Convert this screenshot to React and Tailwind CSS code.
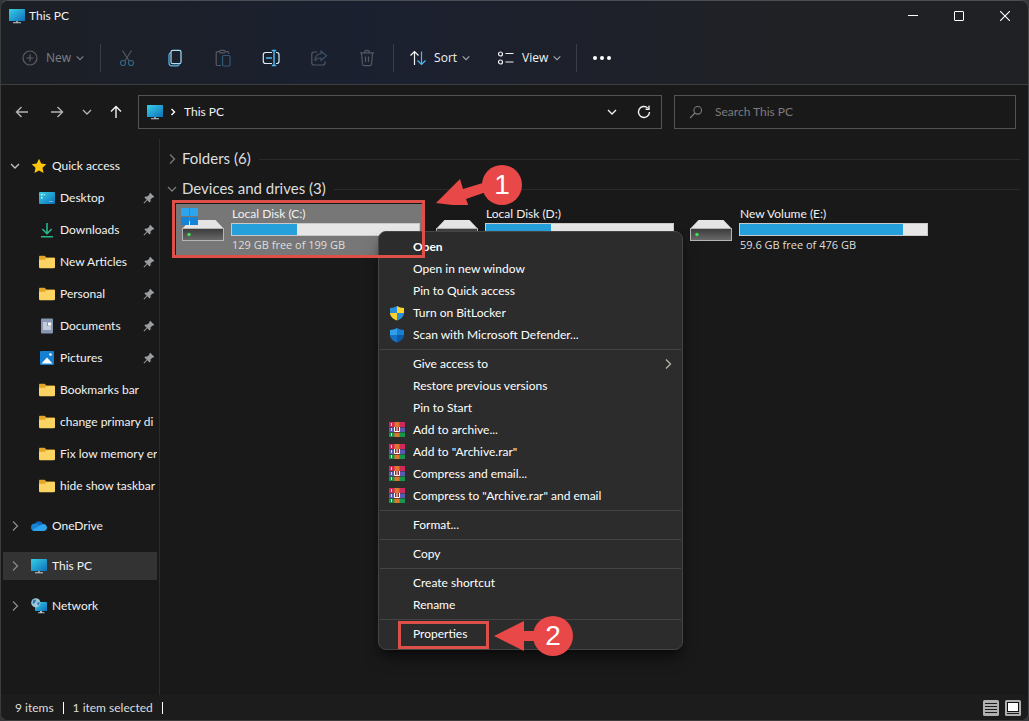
import React from 'react';

const PcIcon = ({ className = 'size-4' }) => (
    <svg viewBox="0 0 16 16" className={className} aria-hidden="true">
        <defs>
            <linearGradient id="pc" x1="0" y1="0" x2="1" y2="1">
                <stop offset="0" stopColor="#35d1e6" />
                <stop offset="1" stopColor="#0f6fbb" />
            </linearGradient>
        </defs>
        <rect x="0" y="1" width="16" height="12" rx="0.6" fill="url(#pc)" />
        <path d="M7 13h2v1.5H7z" fill="#8d9aa5" />
        <path d="M4 14.3h8v1H4z" fill="#c7d0d6" />
    </svg>
);

const FolderIcon = () => (
    <svg viewBox="0 0 16 16" className="size-4" aria-hidden="true">
        <path d="M0 3c0-.8.5-1.300 1.200-1.300h4.300L7.500 3.600H15c.6 0 1 .4 1 1V6H0z" fill="#e3a52a" />
        <path d="M0 5.800h6L7.800 4H15c.6 0 1 .5 1 1v8c0 .7-.4 1.200-1.100 1.200H1.100C.4 14.200 0 13.700 0 13z" fill="#fcd462" />
    </svg>
);

const StarIcon = () => (
    <svg viewBox="0 0 16 16" className="size-4" aria-hidden="true">
        <path d="M8 .8l2.200 4.800 5.100.6-3.800 3.500 1 5.300L8 12.400 3.500 15l1-5.300L.7 6.200l5.100-.6z" fill="#fcc60e" />
    </svg>
);

const DesktopIcon = () => (
    <svg viewBox="0 0 16 16" className="size-4" aria-hidden="true">
        <rect y="2" width="16" height="12" rx="1" fill="url(#pc)" />
        <path d="M2 4h1.500v1.500H2zM2 7h1.500v1.500H2zM4.800 4h1v1.200h-1z" fill="#e8fbff" />
        <path d="M10.500 11h1v1h-1zM12.500 11h1v1h-1z" fill="#cde9fb" />
    </svg>
);

const DownloadsIcon = () => (
    <svg viewBox="0 0 16 16" className="size-4" fill="none" stroke="#29b58c" strokeWidth="1.6" aria-hidden="true">
        <path d="M8 1v10.500M3.300 7L8 11.700 12.700 7M2 14.800h12" />
    </svg>
);

const DocumentsIcon = () => (
    <svg viewBox="0 0 16 16" className="size-4" aria-hidden="true">
        <rect x="2" y="0.5" width="12" height="15" rx="1" fill="#8797b3" />
        <path d="M4 4.500h4v1H4zM4 6.500h4v1H4zM9 4.500h3.200v3H9zM4 8.500h8.200v1H4zM4 10.500h8.200v1H4z" fill="#fff" />
    </svg>
);

const PicturesIcon = () => (
    <svg viewBox="0 0 16 16" className="size-4" aria-hidden="true">
        <rect x="1" y="1" width="14" height="14" rx="1" fill="#1580d2" />
        <path d="M2.500 13.500L8 7.500l5.500 6z" fill="#fff" />
        <circle cx="11.500" cy="4.500" r="1.300" fill="#fff" />
    </svg>
);

const CloudIcon = () => (
    <svg viewBox="0 0 16 16" className="size-4" aria-hidden="true">
        <path d="M4.200 5.500A4.300 4.300 0 0 1 12 6l-7 5z" fill="#0f66b8" />
        <path d="M3.800 5.400a4 4 0 0 1 3 .7l7.600 5.900a2.200 2.200 0 0 1-1.200 1H3.800a3.800 3.800 0 0 1 0-7.600z" fill="#1683d4" />
        <path d="M11.500 6.200a3.500 3.500 0 0 1 2.700 6.400c-.3.300-.8.400-1.200.4H3.500a3 3 0 0 1-2.300-1.100l8-4.700c.7-.6 1.500-1 2.300-1z" fill="#2ba4ec" />
    </svg>
);

const NetworkIcon = () => (
    <svg viewBox="0 0 16 16" className="size-4" aria-hidden="true">
        <rect x="4" y="4" width="12" height="9" rx="0.6" fill="url(#pc)" />
        <path d="M9 13h2v1.500H9zM7 14.300h6.500v1H7z" fill="#b6c3cc" />
        <circle cx="4.800" cy="4.800" r="4.600" fill="#9dc9de" />
        <path d="M2 2.200c1.500-1.200 3-.8 3.300.2.300.9-1.400 1-1.200 2.200.2 1.100-1.800 1.400-2.600.6zM6 4.800l2.500-.8c.5 1.600-.4 3.200-1.500 3.700z" fill="#3979a5" />
    </svg>
);

const PinIcon = () => (
    <svg viewBox="0 0 12 12" className="size-3 shrink-0 text-[#9b9ea1]" fill="currentColor" aria-hidden="true">
        <path d="M7.200.8l4 4-1 .9-.7-.1-2 2 .1 2-1 1L4.300 8.300 1.200 11.500l-.7-.7 3.200-3.100L1.400 5.400l1-1 2 .1 2-2-.1-.8z" />
    </svg>
);

const Chevron = ({ dir = 'down', className = 'size-3' }) => (
    <svg viewBox="0 0 12 12" className={className} fill="none" stroke="currentColor" strokeWidth="1.3" aria-hidden="true">
        {dir === 'down' ? <path d="M2 4l4 4 4-4" /> : <path d="M4 1.500L8.500 6 4 10.500" />}
    </svg>
);

const DriveIcon = ({ system }) => (
    <svg viewBox="0 0 44 36" className="h-9 w-11 shrink-0" aria-hidden="true">
        <defs>
            <linearGradient id="drive" x1="0" y1="0" x2="0" y2="1">
                <stop offset="0" stopColor="#3a3a3a" />
                <stop offset="1" stopColor="#6a6a6a" />
            </linearGradient>
        </defs>
        <path d="M9.500 12h25L43 21H1z" fill="#e4e4e4" />
        <rect x="1.500" y="20.500" width="41" height="12" fill="url(#drive)" stroke="#b5b5b5" />
        <circle cx="8" cy="26.500" r="1.700" fill="#3fe04a" />
        {system && (
            <>
                <path d="M0 0h8v8H0zM9 0h8v8H9z" fill="#2ba5ee" />
                <path d="M0 9h8v8H0zM9 9h8v8H9z" fill="#1583d8" />
            </>
        )}
    </svg>
);

const ShieldIcon = ({ colors }) => (
    <svg viewBox="0 0 16 16" className="size-4" aria-hidden="true">
        <path d="M8 1C6 2.300 3.600 3 1 3v5h7z" fill={colors[0]} />
        <path d="M8 1c2 1.300 4.400 2 7 2v5H8z" fill={colors[1]} />
        <path d="M1 8c.2 3.500 3 6 7 7.500V8z" fill={colors[2]} />
        <path d="M15 8c-.2 3.500-3 6-7 7.500V8z" fill={colors[3]} />
    </svg>
);

const RarIcon = () => (
    <svg viewBox="0 0 16 16" className="size-4" aria-hidden="true">
        <path d="M0 0h16v5H0z" fill="#d0285a" />
        <path d="M0 5.500h16v4.500H0z" fill="#5c5ab0" />
        <path d="M0 10.500h16V15H0z" fill="#16964a" />
        <path d="M2 1h1v3H2zM2 6h1v3H2zM2 11h1v3H2z" fill="#f3dc6b" />
        <path d="M5.500 0h5v15h-5z" fill="#e0762b" />
        <path d="M5 5h6v6H5z" fill="#8a2d2d" />
        <path d="M5.500 5v4.500h5V5M8 5v4" fill="none" stroke="#fff" />
    </svg>
);

const icon = {
    viewBox: '0 0 20 20',
    className: 'size-5',
    fill: 'none',
    stroke: 'currentColor',
    strokeWidth: '1.2',
    'aria-hidden': true,
};

const tools = [
    {
        name: 'Cut',
        disabled: true,
        svg: (
            <svg {...icon}>
                <path d="M5.500 2.500l6.700 10.500M14.500 2.500L7.800 13" />
                <g stroke="#2f6483">
                    <circle cx="6" cy="15" r="2.500" />
                    <circle cx="14" cy="15" r="2.500" />
                </g>
            </svg>
        ),
    },
    {
        name: 'Copy',
        svg: (
            <svg {...icon}>
                <path d="M6 4.500c-1.300.3-2 1-2 2.300V15c0 1.800 1 2.800 2.800 2.800h5.400c1 0 1.800-.5 2.200-1.300" stroke="#58b7ea" />
                <rect x="6" y="2.300" width="10" height="13.400" rx="1.800" stroke="#a9ddf8" />
            </svg>
        ),
    },
    {
        name: 'Paste',
        disabled: true,
        svg: (
            <svg {...icon}>
                <path d="M8 17.500H4.500c-.8 0-1.300-.5-1.300-1.300V5c0-.8.5-1.400 1.300-1.400h2M12.500 3.600h1.800c.8 0 1.400.5 1.400 1.400v1" />
                <rect x="6.700" y="2.300" width="5.600" height="2.600" rx="1.200" />
                <rect x="9.500" y="7.500" width="7.500" height="10.500" rx="1.200" stroke="#2f5a78" />
            </svg>
        ),
    },
    {
        name: 'Rename',
        svg: (
            <svg {...icon}>
                <path d="M11 4.500H4.500c-1.300 0-2.200.9-2.200 2.200v6.600c0 1.300.9 2.200 2.200 2.200H11M15 4.500h.8c1.300 0 2.200.9 2.200 2.200v6.600c0 1.300-.9 2.200-2.200 2.200H15" stroke="#d8ecf7" />
                <path d="M5 10h6M10.800 2.500h4.400M13 2.500v15M10.800 17.500h4.400" stroke="#4db8f0" strokeWidth="1.5" />
            </svg>
        ),
    },
    {
        name: 'Share',
        disabled: true,
        svg: (
            <svg {...icon}>
                <path d="M8 4H5C3.700 4 2.800 4.900 2.800 6.200v8.600C2.800 16.100 3.700 17 5 17h8.800c1.300 0 2.200-.9 2.200-2.200V13.500" />
                <path d="M12 3l5.500 4.800L12 12.500V10c-3 0-4.700.8-6 3 .2-4 2-7 6-7.300z" stroke="#3b5264" />
            </svg>
        ),
    },
    {
        name: 'Delete',
        disabled: true,
        svg: (
            <svg {...icon}>
                <path d="M3 4.800h14M7.500 4.800c0-1.600 1-2.500 2.500-2.500s2.500.9 2.500 2.500M4.500 4.800l1 11.500c.1.900.7 1.400 1.600 1.400h5.800c.9 0 1.500-.5 1.600-1.400l1-11.500M8.500 8.500v5.500M11.500 8.500v5.500" />
            </svg>
        ),
    },
];

const pinned = [
    { name: 'Desktop', icon: <DesktopIcon />, pin: true },
    { name: 'Downloads', icon: <DownloadsIcon />, pin: true },
    { name: 'New Articles', icon: <FolderIcon />, pin: true },
    { name: 'Personal', icon: <FolderIcon />, pin: true },
    { name: 'Documents', icon: <DocumentsIcon />, pin: true },
    { name: 'Pictures', icon: <PicturesIcon />, pin: true },
    { name: 'Bookmarks bar', icon: <FolderIcon /> },
    { name: 'change primary di', icon: <FolderIcon /> },
    { name: 'Fix low memory er', icon: <FolderIcon /> },
    { name: 'hide show taskbar', icon: <FolderIcon /> },
];

const roots = [
    { name: 'OneDrive', icon: <CloudIcon /> },
    { name: 'This PC', icon: <PcIcon />, active: true },
    { name: 'Network', icon: <NetworkIcon /> },
];

const drives = [
    { name: 'Local Disk (C:)', used: 35, info: '129 GB free of 199 GB', selected: true },
    { name: 'Local Disk (D:)', used: 35, info: '' },
    { name: 'New Volume (E:)', used: 87, info: '59.6 GB free of 476 GB' },
];

const menu = [
    [
        { name: 'Open', bold: true },
        { name: 'Open in new window' },
        { name: 'Pin to Quick access' },
        { name: 'Turn on BitLocker', icon: <ShieldIcon colors={['#2b8fd8', '#fbd22e', '#fbd22e', '#2b8fd8']} /> },
        { name: 'Scan with Microsoft Defender...', icon: <ShieldIcon colors={['#2f9fe8', '#1a7fd0', '#1672c4', '#0e5aa6']} /> },
    ],
    [
        { name: 'Give access to', submenu: true },
        { name: 'Restore previous versions' },
        { name: 'Pin to Start' },
        { name: 'Add to archive...', icon: <RarIcon /> },
        { name: 'Add to "Archive.rar"', icon: <RarIcon /> },
        { name: 'Compress and email...', icon: <RarIcon /> },
        { name: 'Compress to "Archive.rar" and email', icon: <RarIcon /> },
    ],
    [{ name: 'Format...' }],
    [{ name: 'Copy' }],
    [{ name: 'Create shortcut' }, { name: 'Rename' }],
    [{ name: 'Properties', marked: true }],
];

const Badge = ({ children }) => (
    <span className="flex size-10 items-center justify-center rounded-full bg-[#e94848] font-['Liberation_Sans',sans-serif] text-[28px] leading-none text-white">
        {children}
    </span>
);

const TitleBar = () => (
    <div className="flex h-[31px] items-center pb-0.5 pl-2">
        <PcIcon />
        <h1 className="ml-1 flex-1">This PC</h1>
        <button aria-label="Minimize" className="flex h-full w-[46px] items-center justify-center">
            <span className="h-px w-2.5 bg-white" />
        </button>
        <button aria-label="Maximize" className="flex h-full w-[46px] items-center justify-center">
            <span className="size-2.5 rounded-[1px] border border-white" />
        </button>
        <button aria-label="Close" className="flex h-full w-[46px] items-center justify-center">
            <svg viewBox="0 0 10 10" className="size-2.5" stroke="#fff" strokeWidth="1.1">
                <path d="M0 0l10 10M10 0L0 10" />
            </svg>
        </button>
    </div>
);

const Divider = () => <span className="h-7 w-px bg-[#3b3e46]" />;

const Toolbar = () => (
    <div className="flex h-[52px] items-center pl-[19px] font-['Open_Sans',sans-serif]">
        <button disabled className="mr-[15px] flex items-center text-[#7d8087]">
            <svg {...icon} stroke="#5b5e66">
                <circle cx="10" cy="10" r="7" />
                <path d="M10 6.500v7M6.500 10h7" />
            </svg>
            <span className="ml-1.5">New</span>
            <Chevron className="ml-1 size-2.5" />
        </button>
        <Divider />
        <div className="mx-0.5 flex">
            {tools.map(tool => (
                <button
                    key={tool.name}
                    aria-label={tool.name}
                    disabled={tool.disabled}
                    className="flex h-9 w-12 items-center justify-center text-[#e4e6e8] disabled:text-[#535861]"
                >
                    {tool.svg}
                </button>
            ))}
        </div>
        <Divider />
        <button className="ml-3.5 flex items-center">
            <svg {...icon}>
                <path d="M6.500 17V3.500M2.500 7.500l4-4 4 4" />
                <path d="M13.500 3.500V17M9.500 12.500l4 4 4-4" stroke="#4db8f0" />
            </svg>
            <span className="ml-1.5">Sort</span>
            <Chevron className="ml-1 size-2.5 text-[#a5a7ac]" />
        </button>
        <button className="ml-[25px] flex items-center">
            <svg {...icon}>
                <circle cx="4.500" cy="6" r="2" />
                <circle cx="4.500" cy="14" r="2" />
                <path d="M9.500 5.500h8M9.500 14h8" />
            </svg>
            <span className="ml-1.5">View</span>
            <Chevron className="ml-1 size-2.5 text-[#a5a7ac]" />
        </button>
        <span className="ml-3.5 h-7 w-px bg-[#3b3e46]" />
        <button aria-label="See more" className="ml-4 flex h-9 items-center gap-[3px]">
            <span className="size-1 rounded-full bg-white" />
            <span className="size-1 rounded-full bg-white" />
            <span className="size-1 rounded-full bg-white" />
        </button>
    </div>
);

const arrow = {
    viewBox: '0 0 14 14',
    className: 'size-3.5',
    fill: 'none',
    stroke: 'currentColor',
    strokeWidth: '1.4',
    'aria-hidden': true,
};

const AddressRow = () => (
    <div className="flex h-[54px] items-center pr-3 pl-[3px]">
        <button aria-label="Back" className="flex h-8 w-9 items-center justify-center text-[#b4b4b4]">
            <svg {...arrow}><path d="M13 7H1.500M6.500 2L1.500 7l5 5" /></svg>
        </button>
        <button aria-label="Forward" className="flex h-8 w-[34px] items-center justify-center text-[#b4b4b4]">
            <svg {...arrow}><path d="M1 7h11.500M7.500 2l5 5-5 5" /></svg>
        </button>
        <button aria-label="Recent locations" className="flex h-8 w-[26px] items-center justify-center text-[#b4b4b4]">
            <Chevron />
        </button>
        <button aria-label="Up" className="mr-1.5 flex h-8 w-8 items-center justify-center">
            <svg {...arrow}><path d="M7 13V1.500M2 6.500l5-5 5 5" /></svg>
        </button>
        <div className="flex h-[34px] flex-1 items-center border border-[#535353] pl-2">
            <PcIcon className="size-4" />
            <svg viewBox="0 0 8 8" className="mx-1.5 size-2" fill="none" stroke="#fff" strokeWidth="1.4" aria-hidden="true">
                <path d="M2.500 1L5.500 4 2.500 7" />
            </svg>
            <a href="#this-pc" className="ml-px flex-1">This PC</a>
            <button aria-label="Previous locations" className="flex size-8 items-center justify-center">
                <Chevron className="size-3" />
            </button>
            <button aria-label="Refresh" className="mr-px flex h-8 w-8 items-center justify-center">
                <svg {...arrow}>
                    <path d="M12.500 7A5.500 5.500 0 1 1 10.600 2.800M12 .8v3.400H8.600" />
                </svg>
            </button>
        </div>
        <label className="ml-3 flex h-[34px] w-[342px] items-center border border-[#535353] pl-3.5">
            <svg {...arrow} stroke="#7c7c7c" strokeWidth="1.1">
                <circle cx="8.700" cy="5.300" r="3.800" />
                <path d="M6 8L1 13" />
            </svg>
            <input
                type="search"
                aria-label="Search This PC"
                placeholder="Search This PC"
                className="ml-3 min-w-0 flex-1 bg-transparent outline-none placeholder:text-[#7c7c7c]"
            />
        </label>
    </div>
);

const Sidebar = () => (
    <nav className="w-[159px] shrink-0 overflow-hidden border-r border-[#2c2c2c] pt-[11px] pr-0.5 pl-0.5">
        <button className="flex h-8 w-full items-center pl-1.5">
            <Chevron className="size-3 text-[#c4c4c4]" />
            <span className="mr-[5px] ml-2.5"><StarIcon /></span>
            Quick access
        </button>
        {pinned.map(item => (
            <a key={item.name} href="#folder" className="flex h-8 items-center gap-[5px] overflow-hidden pl-9 whitespace-nowrap">
                <span className="shrink-0">{item.icon}</span>
                <span className="flex-1">{item.name}</span>
                {item.pin && <span className="mr-0.5"><PinIcon /></span>}
            </a>
        ))}
        <div className="mt-2.5 flex flex-col gap-3">
            {roots.map(item => (
                <a
                    key={item.name}
                    href="#root"
                    className={`flex h-7 items-center pl-1.5 ${item.active ? 'bg-[#333333]' : ''}`}
                >
                    <Chevron dir="right" className="size-3 text-[#8a8a8a]" />
                    <span className="mr-[5px] ml-2.5">{item.icon}</span>
                    {item.name}
                </a>
            ))}
        </div>
    </nav>
);

const GroupHeader = ({ title, dir }) => (
    <h2 className="flex h-[30px] items-center pl-1.5 text-[15px] text-[#dedede]">
        <Chevron dir={dir} className="mr-1 size-3 text-[#7a7a7a]" />
        {title}
        <span className="ml-2 h-px flex-1 bg-[#2a2a2a]" />
    </h2>
);

const Drive = ({ drive }) => (
    <div className={`relative flex h-[52px] w-[248px] pl-[5px] ${drive.selected ? 'bg-[#777777]' : ''}`}>
        <div className="mt-1 flex">
            <DriveIcon system={drive.selected} />
        </div>
        <div className="ml-1.5 w-[189px]">
            <p className="h-[19px] pl-px leading-5">{drive.name}</p>
            <div
                role="progressbar"
                aria-label={drive.name}
                aria-valuenow={drive.used}
                className="h-[13px] border border-[#c9c9c9] bg-[#e6e6e6]"
            >
                <div className="h-full bg-[#26a0da]" style={{ width: `${drive.used}%` }} />
            </div>
            <p className="pl-px font-['Open_Sans',sans-serif] text-[11px] leading-[18px] text-[#dedede]">{drive.info}</p>
        </div>
        {drive.selected && (
            <span className="absolute -top-1 -left-1 z-20 h-[58px] w-[253px] border-3 border-[#dd5049]" />
        )}
    </div>
);

const ContextMenu = () => (
    <div
        role="menu"
        className="absolute top-[92px] left-[218px] z-10 w-[305px] rounded-lg border border-[#454545] bg-[#2c2c2c] py-1 text-white shadow-lg shadow-black/50"
    >
        {menu.map((group, i) => (
            <div key={group[0].name}>
                {i > 0 && <hr className="mx-px my-[3px] border-[#444444]" />}
                {group.map(item => (
                    <div key={item.name} className="relative">
                        <button role="menuitem" className="flex h-[22px] w-full items-center gap-2 pr-2 pl-2.5 text-left">
                            <span className="size-4 shrink-0">{item.icon}</span>
                            <span className={item.bold ? 'flex-1 font-bold' : 'flex-1'}>{item.name}</span>
                            {item.submenu && <Chevron dir="right" className="size-3 text-[#b5b5a5]" />}
                        </button>
                        {item.marked && (
                            <>
                                <span className="absolute -top-0.5 left-[19px] h-7 w-[91px] border-3 border-[#dd5049]" />
                                <div className="absolute -top-[7px] left-[115px] flex items-center">
                                    <svg viewBox="0 0 40 30" className="-mr-px h-[30px] w-10" fill="#e94848">
                                        <path d="M0 15L30 0v10h10v10H30v10z" />
                                    </svg>
                                    <Badge>2</Badge>
                                </div>
                            </>
                        )}
                    </div>
                ))}
            </div>
        ))}
    </div>
);

const StatusBar = () => (
    <footer className="flex h-[25px] items-center bg-[#1c1c1c] pt-px pr-[7px] pl-3.5 text-[#dedede]">
        <span>9 items</span>
        <span className="mx-[9px] h-3 w-px bg-white" />
        <span>1 item selected</span>
        <span className="mx-[9px] h-3 w-px bg-white" />
        <button aria-label="Details view" className="mr-1.5 ml-auto">
            <svg viewBox="0 0 16 16" className="size-4">
                <rect width="16" height="16" rx="1.500" fill="#b0b0b0" />
                <path d="M2 3.500h12M2 6.500h12M2 9.500h12M2 12.500h12" stroke="#1c1c1c" />
            </svg>
        </button>
        <button aria-label="Large icons view">
            <svg viewBox="0 0 16 16" className="size-4">
                <rect width="16" height="16" rx="1.500" fill="#b0b0b0" />
                <rect x="2.500" y="2.500" width="11" height="9" fill="#fff" stroke="#111" />
                <path d="M2 13.500h12" stroke="#1c1c1c" />
            </svg>
        </button>
    </footer>
);

const App = () => {
    return (
        <div className="flex min-h-screen bg-[#34363a] font-['Lato','Open_Sans',sans-serif] text-xs text-[#f2f2f2]">
            <div className="flex flex-1 flex-col overflow-hidden rounded-lg border border-t-[#4b4d55] border-r-[#48494b] border-b-[#3c3c3c] border-l-[#3c3c3c] bg-[#191919]">
                <header className="border-b border-[#3d3e40] bg-linear-to-r from-[#1c1f24] via-[#1b2030] via-35% to-[#202124] to-80%">
                    <TitleBar />
                    <Toolbar />
                </header>
                <AddressRow />
                <div className="flex flex-1">
                    <Sidebar />
                    <main className="relative min-w-0 flex-1 pt-[5px] pr-2">
                        <GroupHeader title="Folders (6)" dir="right" />
                        <GroupHeader title="Devices and drives (3)" dir="down" />
                        <div className="flex flex-wrap gap-1.5 pl-4">
                            {drives.map(drive => (
                                <Drive key={drive.name} drive={drive} />
                            ))}
                        </div>
                        <div className="absolute top-[26px] left-[276px] z-20 flex">
                            <svg viewBox="0 0 50 40" className="-mr-1 h-10 w-[50px]" fill="#e94848">
                                <path d="M0 38L24 14l3 10 23-7v10l-20 7 3 8z" />
                            </svg>
                            <Badge>1</Badge>
                        </div>
                        <ContextMenu />
                    </main>
                </div>
                <StatusBar />
            </div>
        </div>
    );
};

export default App;
